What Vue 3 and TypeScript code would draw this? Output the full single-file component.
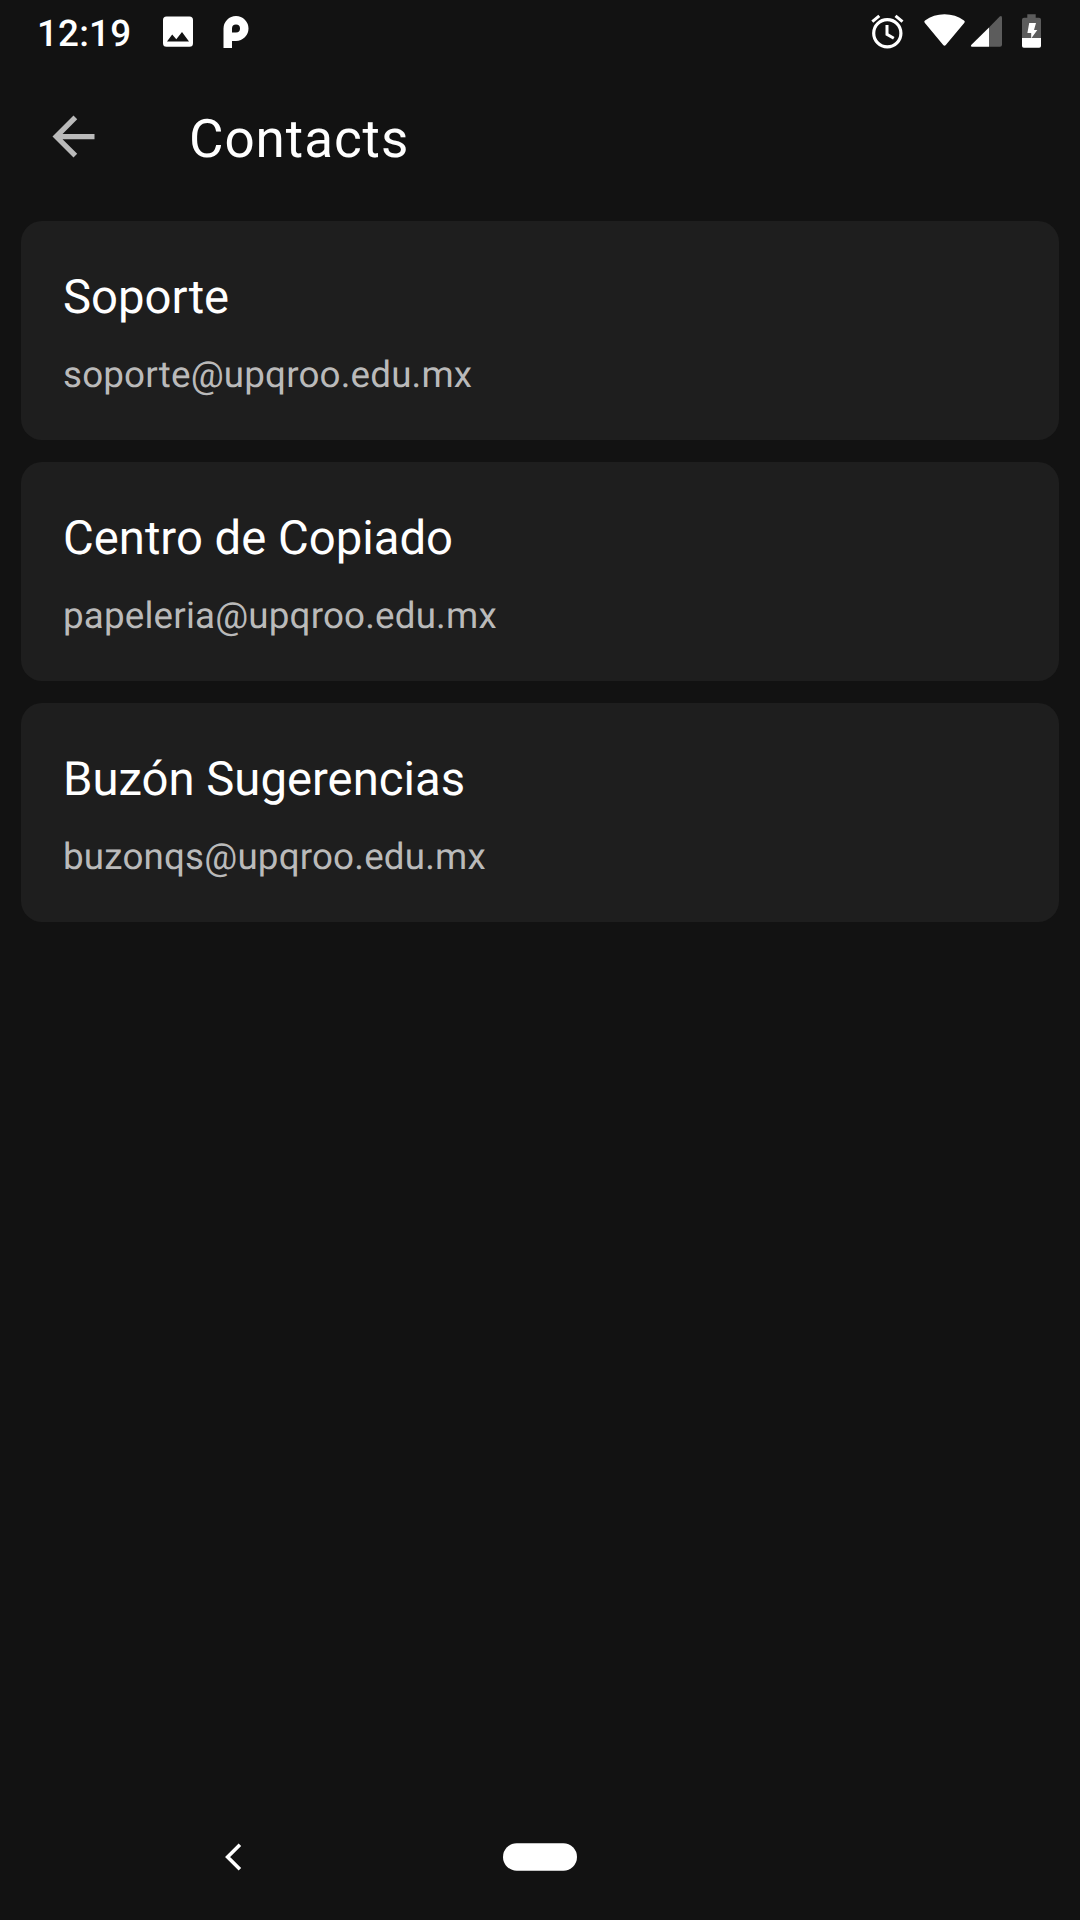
<script setup lang="ts">
interface Contact {
  name: string
  email: string
}

const contacts: Contact[] = [
  { name: 'Soporte', email: 'soporte@upqroo.edu.mx' },
  { name: 'Centro de Copiado', email: 'papeleria@upqroo.edu.mx' },
  { name: 'Buzón Sugerencias', email: 'buzonqs@upqroo.edu.mx' },
]
</script>

<template>
  <div class="screen">
    <header class="status">
      <span class="clock">12:19</span>
      <svg class="notices" width="100" height="63" viewBox="160 0 100 63">
        <path
          fill="#fff"
          fill-rule="evenodd"
          d="M166.500 16.500H189.500Q193 16.500 193 20V43.200Q193 46.700 189.500 46.700H166.500Q163 46.700 163 43.200V20Q163 16.500 166.500 16.500ZM167 41.500H189L182 32L176.300 39.300L172.200 34.600Z"
        />
        <path
          fill="#fff"
          fill-rule="evenodd"
          d="M223.500 48V28.500A12.500 12.500 0 1 1 236 41H232V48ZM236 24.400Q232 24.400 232 28.400V32.400H236A4 4 0 0 0 236 24.400Z"
        />
      </svg>
      <svg class="system" width="180" height="63" viewBox="870 0 180 63">
        <circle cx="887.300" cy="33.200" r="13.600" fill="none" stroke="#fff" stroke-width="3.200" />
        <path
          d="M887 25V34.300L893.800 38.200M872.300 21.700L879.300 15.800M895.500 15.800L902.500 21.700"
          fill="none"
          stroke="#fff"
          stroke-width="3"
        />
        <path
          fill="#fff"
          d="M924.700 22.800Q923.700 21.400 925 20.500Q933.500 14.200 944.500 14.200T964 20.500Q965.400 21.400 964.400 22.800L945.800 45Q944.500 46.300 943.200 45Z"
        />
        <path fill="#5c5c5c" d="M989 27.500L999.700 16.500Q1002 15 1002 18V44.700Q1002 46.800 1000 46.800H989Z" />
        <path fill="#fff" d="M989 27.500V46.800H972Q970 46.300 971.200 44.900Z" />
        <path
          fill="#5c5c5c"
          d="M1027.300 14.200H1035.700V17.700H1039Q1041 17.700 1041 19.700V38H1022V19.700Q1022 17.700 1024 17.700H1027.300Z"
        />
        <path fill="#fff" d="M1022 38H1041V46Q1041 47.800 1039.200 47.800H1023.800Q1022 47.800 1022 46Z" />
        <path fill="#fff" d="M1029.200 23H1036L1034 30H1037.300L1031.200 38.500V33H1027.400Z" />
      </svg>
    </header>

    <div class="appbar">
      <svg class="back" width="63" height="63" viewBox="0 0 24 24">
        <path fill="#bababa" d="M20 11H7.830l5.590-5.590L12 4l-8 8 8 8 1.410-1.410L7.830 13H20v-2z" />
      </svg>
      <h1 class="heading">Contacts</h1>
    </div>

    <main class="list">
      <article v-for="contact in contacts" :key="contact.email" class="card">
        <h2 class="name">{{ contact.name }}</h2>
        <p class="email">{{ contact.email }}</p>
      </article>
    </main>

    <nav class="navbar">
      <svg class="nav-back" width="20" height="30" viewBox="223 1842 20 30">
        <path d="M239.900 1844.800L227.600 1857L239.900 1869.200" fill="none" stroke="#fff" stroke-width="3.600" />
      </svg>
      <svg class="nav-home" width="74" height="30" viewBox="0 0 74 30">
        <rect y="1.300" width="74" height="27.400" rx="13.700" fill="#fff" />
      </svg>
    </nav>
  </div>
</template>

<style>
body {
  margin: 0;
  background: #121212;
}
</style>

<style scoped>
.screen {
  display: flex;
  flex-direction: column;
  width: 1080px;
  height: 1920px;
  background: #121212;
  color: #fff;
  font-family: Roboto, sans-serif;
  text-rendering: geometricPrecision;
  overflow: hidden;
}
.status {
  display: flex;
  align-items: center;
  height: 63px;
}
.clock {
  width: 123px;
  padding: 4px 0 0 37px;
  font-size: 36.75px;
  font-weight: 500;
  line-height: 44px;
  letter-spacing: 0.2px;
}
.system {
  margin-left: auto;
  margin-right: 30px;
}
.appbar {
  display: flex;
  align-items: center;
  height: 147px;
}
.back {
  margin-left: 42px;
}
.heading {
  margin: 5px 0 0 84px;
  font-size: 53px;
  font-weight: 400;
  line-height: 62px;
  letter-spacing: 0.95px;
}
.list {
  display: flex;
  flex-direction: column;
  gap: 22px;
  padding: 11px 21px 0;
}
.card {
  box-sizing: border-box;
  height: 219px;
  padding: 48px 42px 0;
  border-radius: 21px;
  background: #1e1e1e;
}
.name {
  margin: 0;
  font-size: 47.25px;
  font-weight: 400;
  line-height: 56px;
}
.email {
  margin: 28px 0 0;
  color: #bababa;
  font-size: 36.75px;
  line-height: 44px;
  letter-spacing: 0.18px;
}
.navbar {
  display: flex;
  align-items: center;
  height: 126px;
  margin-top: auto;
}
.nav-back {
  margin-left: 223px;
}
.nav-home {
  margin-left: 260px;
}
</style>
